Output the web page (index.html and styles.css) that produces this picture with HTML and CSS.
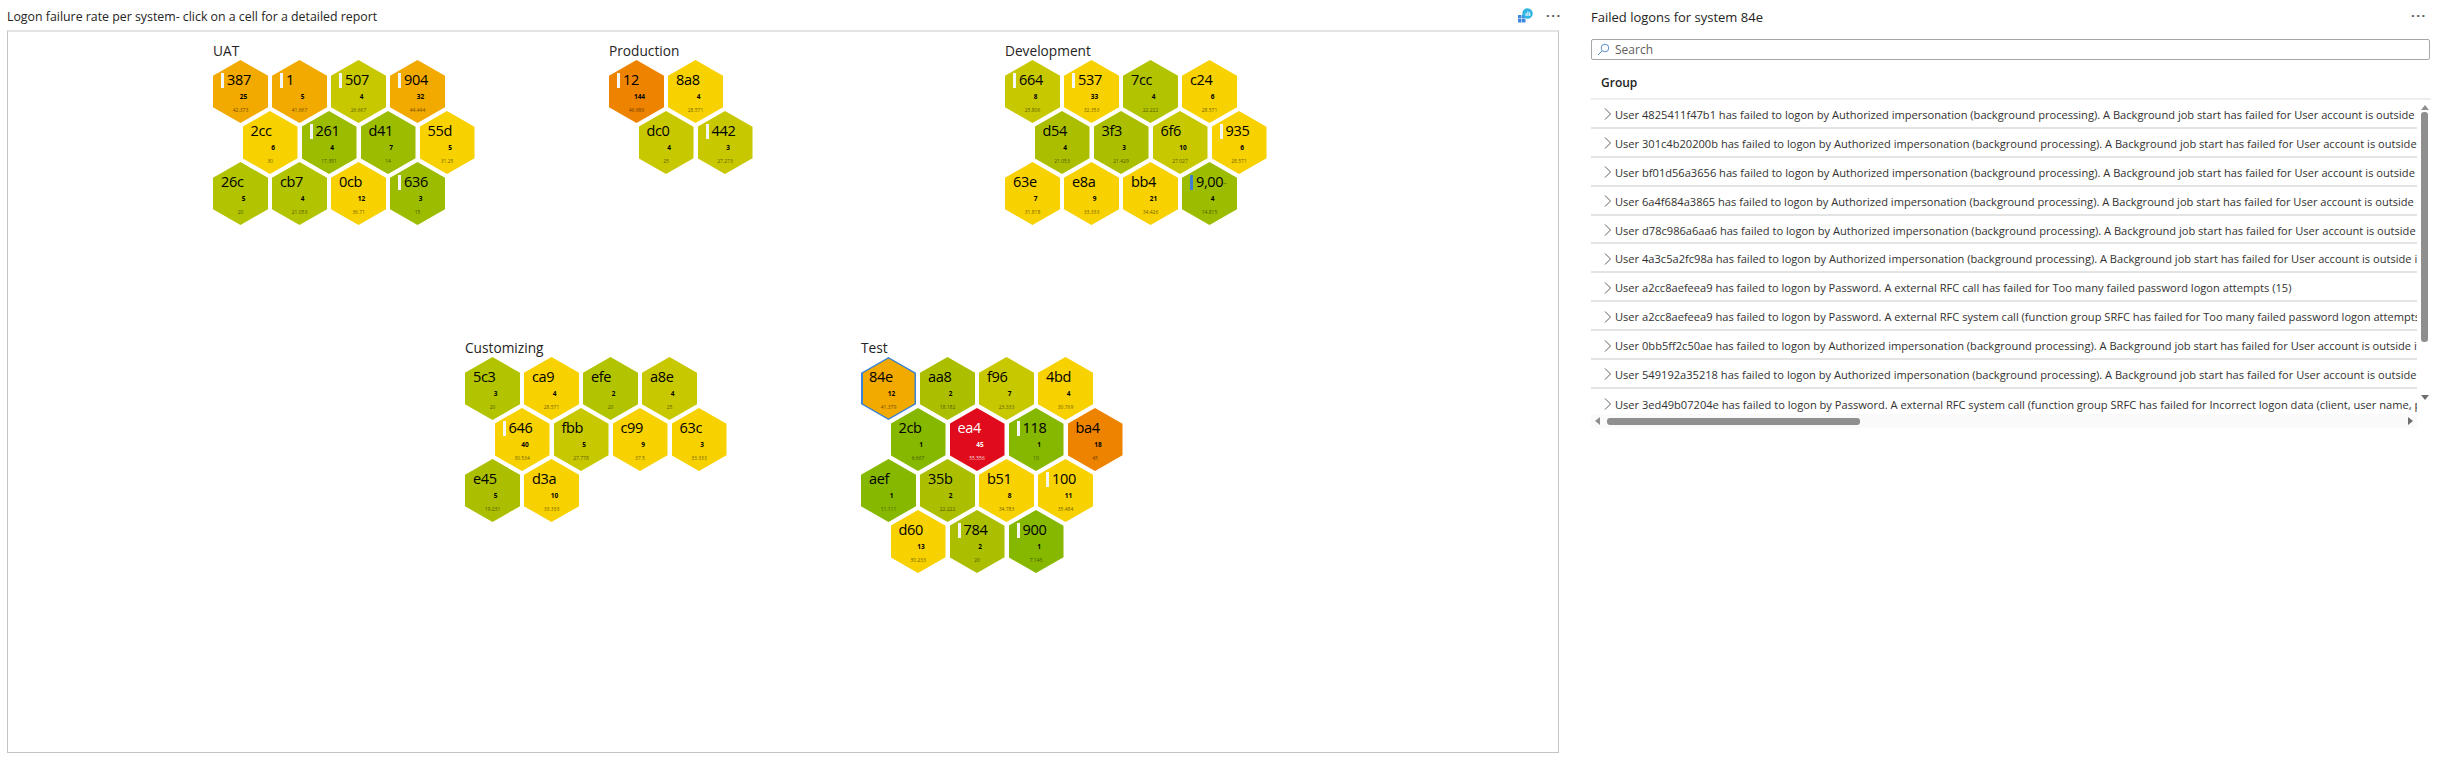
FILE: index.html
```html
<!DOCTYPE html>
<html lang="en">
<head>
    <meta charset="UTF-8">
    <title>Logon failure rate</title>
    <link rel="stylesheet" href="styles.css">
</head>
<body>
    <section class="left-panel">
        <header class="panel-head">
            <h2 class="panel-title">Logon failure rate per system- click on a cell for a detailed report</h2>
            <svg class="insight-icon" width="15" height="15" viewBox="0 0 15 15">
                <rect x="0" y="7" width="3.5" height="3.5" fill="#3f8ae0"/>
                <rect x="4" y="7" width="3.5" height="3.5" fill="#3f8ae0"/>
                <rect x="0" y="11" width="3.5" height="3.5" fill="#3f8ae0"/>
                <rect x="4" y="11" width="3.5" height="3.5" fill="#3f8ae0"/>
                <circle cx="9.5" cy="5.5" r="5.2" fill="#2fb4e4"/>
                <rect x="7.6" y="5" width="1" height="3" fill="#fff"/>
                <rect x="9.4" y="3.4" width="1" height="4.6" fill="#fff"/>
                <rect x="11.2" y="4.4" width="1" height="3.6" fill="#fff"/>
            </svg>
            <span class="more">&middot;&middot;&middot;</span>
        </header>
        <div class="board">
            <div class="group-row row-top">
                <div class="group">
                    <h3 class="group-title">UAT</h3>
                    <div class="hex-row">
                        <div class="hex orange"><span class="name mark">387</span><span class="count">25</span><span class="pct">42.373</span></div>
                        <div class="hex orange"><span class="name mark">1</span><span class="count">5</span><span class="pct">41.667</span></div>
                        <div class="hex olive"><span class="name mark">507</span><span class="count">4</span><span class="pct">26.667</span></div>
                        <div class="hex orange"><span class="name mark">904</span><span class="count">32</span><span class="pct">44.444</span></div>
                    </div>
                    <div class="hex-row shifted">
                        <div class="hex yellow"><span class="name">2cc</span><span class="count">6</span><span class="pct">30</span></div>
                        <div class="hex green"><span class="name mark">261</span><span class="count">4</span><span class="pct">17.391</span></div>
                        <div class="hex green"><span class="name">d41</span><span class="count">7</span><span class="pct">14</span></div>
                        <div class="hex yellow"><span class="name">55d</span><span class="count">5</span><span class="pct">31.25</span></div>
                    </div>
                    <div class="hex-row">
                        <div class="hex lime"><span class="name">26c</span><span class="count">5</span><span class="pct">20</span></div>
                        <div class="hex lime"><span class="name">cb7</span><span class="count">4</span><span class="pct">21.053</span></div>
                        <div class="hex yellow"><span class="name">0cb</span><span class="count">12</span><span class="pct">36.71</span></div>
                        <div class="hex green"><span class="name mark">636</span><span class="count">3</span><span class="pct">15</span></div>
                    </div>
                </div>
                <div class="group">
                    <h3 class="group-title">Production</h3>
                    <div class="hex-row">
                        <div class="hex deep"><span class="name mark">12</span><span class="count">144</span><span class="pct">46.986</span></div>
                        <div class="hex yellow"><span class="name">8a8</span><span class="count">4</span><span class="pct">28.571</span></div>
                    </div>
                    <div class="hex-row shifted">
                        <div class="hex olive"><span class="name">dc0</span><span class="count">4</span><span class="pct">25</span></div>
                        <div class="hex olive"><span class="name mark">442</span><span class="count">3</span><span class="pct">27.273</span></div>
                    </div>
                </div>
                <div class="group">
                    <h3 class="group-title">Development</h3>
                    <div class="hex-row">
                        <div class="hex olive"><span class="name mark">664</span><span class="count">8</span><span class="pct">25.806</span></div>
                        <div class="hex yellow"><span class="name mark">537</span><span class="count">33</span><span class="pct">32.353</span></div>
                        <div class="hex lime"><span class="name">7cc</span><span class="count">4</span><span class="pct">22.222</span></div>
                        <div class="hex yellow"><span class="name">c24</span><span class="count">6</span><span class="pct">28.571</span></div>
                    </div>
                    <div class="hex-row shifted">
                        <div class="hex lime2"><span class="name">d54</span><span class="count">4</span><span class="pct">21.053</span></div>
                        <div class="hex lime2"><span class="name">3f3</span><span class="count">3</span><span class="pct">21.429</span></div>
                        <div class="hex olive"><span class="name">6f6</span><span class="count">10</span><span class="pct">27.027</span></div>
                        <div class="hex yellow"><span class="name mark">935</span><span class="count">6</span><span class="pct">28.571</span></div>
                    </div>
                    <div class="hex-row">
                        <div class="hex yellow"><span class="name">63e</span><span class="count">7</span><span class="pct">31.818</span></div>
                        <div class="hex yellow"><span class="name">e8a</span><span class="count">9</span><span class="pct">33.333</span></div>
                        <div class="hex yellow"><span class="name">bb4</span><span class="count">21</span><span class="pct">34.426</span></div>
                        <div class="hex green"><span class="name mark blue">9,00<small>...</small></span><span class="count">4</span><span class="pct">14.815</span></div>
                    </div>
                </div>
            </div>
            <div class="group-row row-bottom">
                <div class="group">
                    <h3 class="group-title">Customizing</h3>
                    <div class="hex-row">
                        <div class="hex lime"><span class="name">5c3</span><span class="count">3</span><span class="pct">20</span></div>
                        <div class="hex yellow"><span class="name">ca9</span><span class="count">4</span><span class="pct">28.571</span></div>
                        <div class="hex lime"><span class="name">efe</span><span class="count">2</span><span class="pct">20</span></div>
                        <div class="hex olive"><span class="name">a8e</span><span class="count">4</span><span class="pct">25</span></div>
                    </div>
                    <div class="hex-row shifted">
                        <div class="hex yellow"><span class="name mark">646</span><span class="count">40</span><span class="pct">30.534</span></div>
                        <div class="hex olive"><span class="name">fbb</span><span class="count">5</span><span class="pct">27.778</span></div>
                        <div class="hex yellow"><span class="name">c99</span><span class="count">9</span><span class="pct">37.5</span></div>
                        <div class="hex yellow"><span class="name">63c</span><span class="count">3</span><span class="pct">33.333</span></div>
                    </div>
                    <div class="hex-row">
                        <div class="hex lime2"><span class="name">e45</span><span class="count">5</span><span class="pct">19.231</span></div>
                        <div class="hex yellow"><span class="name">d3a</span><span class="count">10</span><span class="pct">33.333</span></div>
                    </div>
                </div>
                <div class="group">
                    <h3 class="group-title">Test</h3>
                    <div class="hex-row">
                        <div class="hex orange selected"><span class="name">84e</span><span class="count">12</span><span class="pct">41.379</span></div>
                        <div class="hex lime2"><span class="name">aa8</span><span class="count">2</span><span class="pct">18.182</span></div>
                        <div class="hex olive"><span class="name">f96</span><span class="count">7</span><span class="pct">23.333</span></div>
                        <div class="hex yellow"><span class="name">4bd</span><span class="count">4</span><span class="pct">30.769</span></div>
                    </div>
                    <div class="hex-row shifted">
                        <div class="hex leaf"><span class="name">2cb</span><span class="count">1</span><span class="pct">6.667</span></div>
                        <div class="hex red"><span class="name">ea4</span><span class="count">45</span><span class="pct">55.556</span></div>
                        <div class="hex leaf"><span class="name mark">118</span><span class="count">1</span><span class="pct">10</span></div>
                        <div class="hex deep"><span class="name">ba4</span><span class="count">18</span><span class="pct">45</span></div>
                    </div>
                    <div class="hex-row">
                        <div class="hex leaf"><span class="name">aef</span><span class="count">1</span><span class="pct">11.111</span></div>
                        <div class="hex lime2"><span class="name">35b</span><span class="count">2</span><span class="pct">22.222</span></div>
                        <div class="hex yellow"><span class="name">b51</span><span class="count">8</span><span class="pct">34.783</span></div>
                        <div class="hex yellow"><span class="name mark">100</span><span class="count">11</span><span class="pct">35.484</span></div>
                    </div>
                    <div class="hex-row shifted">
                        <div class="hex yellow"><span class="name">d60</span><span class="count">13</span><span class="pct">30.233</span></div>
                        <div class="hex lime2"><span class="name mark">784</span><span class="count">2</span><span class="pct">20</span></div>
                        <div class="hex leaf"><span class="name mark">900</span><span class="count">1</span><span class="pct">7.143</span></div>
                    </div>
                </div>
            </div>
        </div>
    </section>

    <section class="right-panel">
        <header class="panel-head right-head">
            <h2 class="panel-title">Failed logons for system 84e</h2>
            <span class="more">&middot;&middot;&middot;</span>
        </header>
        <div class="search">
            <svg width="13" height="13" viewBox="0 0 13 13" fill="none" stroke="#5b8fd0" stroke-width="1">
                <circle cx="8" cy="5" r="3.8"/>
                <path d="M5.2 7.8 1 12"/>
            </svg>
            <span>Search</span>
        </div>
        <div class="group-head">Group</div>
        <div class="grid-wrap">
            <div class="grid-rows">
                <div class="log-row"><svg class="chev" width="7" height="12" viewBox="0 0 7 12"><path d="M1 .5 6.500 6 1 11.500"/></svg><span>User 4825411f47b1 has failed to logon by Authorized impersonation (background processing). A Background job start has failed for User account is outside its validity period</span></div>
                <div class="log-row"><svg class="chev" width="7" height="12" viewBox="0 0 7 12"><path d="M1 .5 6.500 6 1 11.500"/></svg><span>User 301c4b20200b has failed to logon by Authorized impersonation (background processing). A Background job start has failed for User account is outside its validity period</span></div>
                <div class="log-row"><svg class="chev" width="7" height="12" viewBox="0 0 7 12"><path d="M1 .5 6.500 6 1 11.500"/></svg><span>User bf01d56a3656 has failed to logon by Authorized impersonation (background processing). A Background job start has failed for User account is outside its validity period</span></div>
                <div class="log-row"><svg class="chev" width="7" height="12" viewBox="0 0 7 12"><path d="M1 .5 6.500 6 1 11.500"/></svg><span>User 6a4f684a3865 has failed to logon by Authorized impersonation (background processing). A Background job start has failed for User account is outside its validity period</span></div>
                <div class="log-row"><svg class="chev" width="7" height="12" viewBox="0 0 7 12"><path d="M1 .5 6.500 6 1 11.500"/></svg><span>User d78c986a6aa6 has failed to logon by Authorized impersonation (background processing). A Background job start has failed for User account is outside its validity period</span></div>
                <div class="log-row"><svg class="chev" width="7" height="12" viewBox="0 0 7 12"><path d="M1 .5 6.500 6 1 11.500"/></svg><span>User 4a3c5a2fc98a has failed to logon by Authorized impersonation (background processing). A Background job start has failed for User account is outside its validity period</span></div>
                <div class="log-row"><svg class="chev" width="7" height="12" viewBox="0 0 7 12"><path d="M1 .5 6.500 6 1 11.500"/></svg><span>User a2cc8aefeea9 has failed to logon by Password. A external RFC call has failed for Too many failed password logon attempts (15)</span></div>
                <div class="log-row"><svg class="chev" width="7" height="12" viewBox="0 0 7 12"><path d="M1 .5 6.500 6 1 11.500"/></svg><span>User a2cc8aefeea9 has failed to logon by Password. A external RFC system call (function group SRFC has failed for Too many failed password logon attempts (15)</span></div>
                <div class="log-row"><svg class="chev" width="7" height="12" viewBox="0 0 7 12"><path d="M1 .5 6.500 6 1 11.500"/></svg><span>User 0bb5ff2c50ae has failed to logon by Authorized impersonation (background processing). A Background job start has failed for User account is outside its validity period</span></div>
                <div class="log-row"><svg class="chev" width="7" height="12" viewBox="0 0 7 12"><path d="M1 .5 6.500 6 1 11.500"/></svg><span>User 549192a35218 has failed to logon by Authorized impersonation (background processing). A Background job start has failed for User account is outside its validity period</span></div>
                <div class="log-row"><svg class="chev" width="7" height="12" viewBox="0 0 7 12"><path d="M1 .5 6.500 6 1 11.500"/></svg><span>User 3ed49b07204e has failed to logon by Password. A external RFC system call (function group SRFC has failed for Incorrect logon data (client, user name, password)</span></div>
            </div>
            <div class="v-scroll">
                <span class="arrow-up"></span>
                <span class="v-thumb"></span>
                <span class="arrow-down"></span>
            </div>
        </div>
        <div class="h-scroll">
            <span class="arrow-left"></span>
            <div class="h-track"><span class="h-thumb"></span></div>
            <span class="arrow-right"></span>
        </div>
    </section>
</body>
</html>
```

FILE: styles.css
```css
* { box-sizing: border-box; }
html, body { height: 100%; }
body { margin: 0; display: flex; height: 768px; overflow: hidden; background: #fff; font-family: "Open Sans", "Noto Sans", sans-serif; color: #252423; }
h2, h3 { margin: 0; font-weight: 400; }

.left-panel { width: 1552px; margin-left: 7px; flex: none; display: flex; flex-direction: column; }
.right-panel { width: 840px; margin-left: 32px; flex: none; }

.panel-head { height: 30px; display: flex; align-items: center; }
.panel-title { flex: 1; font-size: 12.35px; padding-top: 3px; white-space: nowrap; }
.right-head .panel-title { font-size: 13px; }
.insight-icon { margin-right: 13px; margin-top: 1px; }
.more { width: 15px; margin-right: -2px; color: #555; font-size: 13px; letter-spacing: 1.5px; font-weight: 700; line-height: 1; }
.right-head .more { margin-right: 5px; }

.board { height: 723px; border: 1px solid #c4c4c4; border-top: 2px solid #e4e4e4; }
.group-row { display: flex; }
.row-top { height: 296px; padding: 11px 0 0 205px; }
.row-bottom { padding: 12px 0 0 457px; }
.group { width: 396px; }
.group-title { font-size: 13.7px; line-height: 16px; height: 16px; margin-bottom: 1px; white-space: nowrap; }

.hex-row { display: flex; gap: 4px; margin-top: -12px; }
.group-title + .hex-row { margin-top: 0; }
.shifted { margin-left: 29.5px; }

.hex { position: relative; width: 55px; height: 63px; flex: none; display: flex; flex-direction: column; padding: 12px 0 0 8px; color: #000; clip-path: polygon(50% 0, 100% 25%, 100% 75%, 50% 100%, 0 75%, 0 25%); }
.orange { background: #f2a900; }
.deep { background: #ee8300; }
.yellow { background: #f7d100; }
.olive { background: #c8c800; }
.lime { background: #b2c300; }
.lime2 { background: #abbf00; }
.green { background: #9cbc00; }
.leaf { background: #87b800; }
.red { background: #e00b1c; color: #fff; }

/* blue outline of the picked cell: the blue shows round an inner hexagon */
.selected { background: #3a83d6; }
.selected::before { content: ""; position: absolute; inset: 1.5px; background: #f2a900; clip-path: polygon(50% 0, 100% 25%, 100% 75%, 50% 100%, 0 75%, 0 25%); }
.selected > span { position: relative; }

.name { display: flex; align-items: center; height: 16px; font-size: 14.5px; letter-spacing: -.35px; line-height: 16px; white-space: nowrap; }
.name small { font-size: 5px; align-self: flex-end; }
.mark::before { content: ""; width: 3px; height: 15px; margin-right: 3px; background: #f4f7f4; flex: none; }
.blue::before { background: #3f7fd0; }
.count { margin: 4px 0 0 -6px; text-align: center; font-size: 6.5px; line-height: 9px; font-weight: 700; padding-left: 4px; }
.pct { margin: 5.500px 0 0 -8px; text-align: center; font-size: 5px; line-height: 7px; color: rgba(0, 0, 0, .6); }
.red .pct { color: rgba(255, 255, 255, .85); }

.search { height: 21px; margin-top: 9px; width: 839px; border: 1px solid #a6a6a6; border-radius: 2px; display: flex; align-items: center; gap: 5px; padding-left: 5px; font-size: 12px; color: #605e5c; }
.group-head { height: 40px; padding: 15px 0 0 10px; font-size: 12px; font-weight: 600; line-height: 16px; border-bottom: 2px solid #eee; }

.grid-wrap { display: flex; height: 314px; }
.grid-rows { width: 826px; overflow: hidden; flex: none; }
.log-row { height: 28.900px; display: flex; align-items: center; gap: 4px; padding: 2px 0 0 13px; border-bottom: 2px solid #e4e4e4; font-size: 11.1px; white-space: nowrap; color: #323130; }
.log-row:last-child { border-bottom: 0; }
.chev { flex: none; fill: none; stroke: #605e5c; stroke-width: 1; }

.v-scroll { width: 14px; margin-left: 1px; display: flex; flex-direction: column; align-items: center; }
.v-thumb { width: 7px; height: 230px; margin-top: 2px; background: #8f8f8f; border-radius: 3px; }
.arrow-up { margin-top: 5px; border: 4px solid transparent; border-top: 0; border-bottom: 5px solid #8f8f8f; }
.arrow-down { margin-top: 53px; border: 4px solid transparent; border-bottom: 0; border-top: 5px solid #6e6e6e; }

.h-scroll { display: flex; align-items: center; height: 14px; width: 826px; background: #fafafa; }
.h-track { flex: 1; padding-left: 7px; }
.h-thumb { display: block; width: 253px; height: 7px; background: #8f8f8f; border-radius: 3px; }
.arrow-left { margin-left: 4px; border: 4px solid transparent; border-left: 0; border-right: 5px solid #8f8f8f; }
.arrow-right { margin-right: 4px; border: 4px solid transparent; border-right: 0; border-left: 5px solid #6e6e6e; }
```
